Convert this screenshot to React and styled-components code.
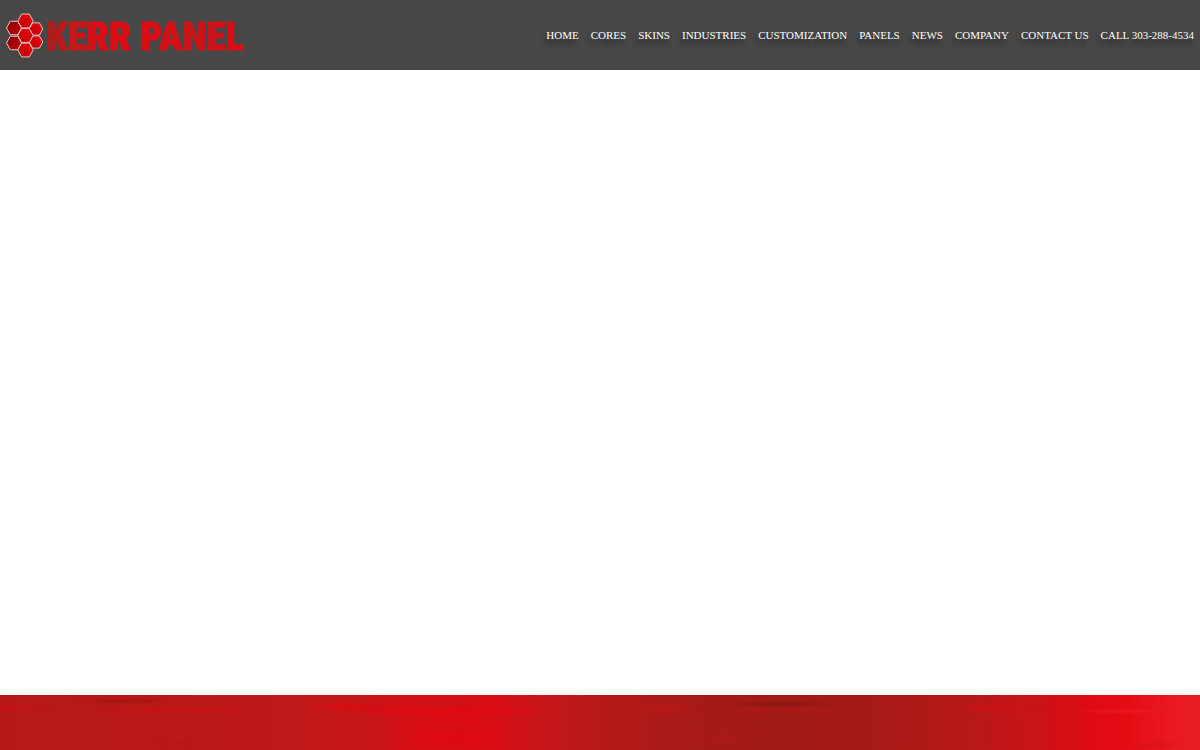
import styled, { createGlobalStyle } from "styled-components";

const GlobalStyle = createGlobalStyle`
  body {
    margin: 0;
    background: #fff;
    font-family: "Liberation Serif", "Times New Roman", serif;
  }
`;

const Page = styled.div`
  display: flex;
  flex-direction: column;
  min-height: 100vh;
`;

const Header = styled.header`
  display: flex;
  align-items: center;
  justify-content: space-between;
  height: 70px;
  padding: 0 6px;
  background: #474747;
`;

const Brand = styled.a`
  display: flex;
  align-items: center;
  gap: 2px;
  text-decoration: none;
`;

const BrandName = styled.span`
  padding-top: 4px;
  font-family: "Roboto Condensed", "Noto Sans ExtraCondensed", "Noto Sans Condensed", "Open Sans Condensed", Roboto, sans-serif;
  font-size: 39px;
  font-weight: 900;
  line-height: 44px;
  white-space: nowrap;
  color: transparent;
  background: linear-gradient(90deg, #a81d1b 0%, #c4181a 12%, #dc0c14 26%, #dc0c14 55%, #c8161a 72%, #dc0c14 100%);
  background-clip: text;
  -webkit-text-stroke: 1px transparent;
`;

const Nav = styled.nav`
  display: flex;
  gap: 12px;
`;

const NavLink = styled.a`
  color: #fff;
  font-size: 11px;
  line-height: 14px;
  text-decoration: none;
  text-transform: uppercase;
  text-shadow: -2px 5px 5px rgba(0, 0, 0, 0.5);
  white-space: nowrap;
`;

const Main = styled.main`
  flex: 1;
`;

const Banner = styled.footer`
  height: 55px;
  overflow: hidden;
  background: linear-gradient(
    90deg,
    #b41919 0%,
    #b91818 12%,
    #bd1818 22%,
    #c51617 30%,
    #d90d14 35%,
    #db0c13 40%,
    #c81518 45%,
    #b51919 50%,
    #a81a18 56%,
    #a01a16 66%,
    #a61a17 73%,
    #b51818 80%,
    #c41517 85%,
    #de0a12 91%,
    #e70c14 94%,
    #e81b21 98%,
    #e71c22 100%
  );
`;

const Streaks = styled.svg`
  display: block;
  width: 100%;
  height: 100%;
`;

const cells = [
  { x: 13, y: 28, r: 7.5 },
  { x: 13, y: 43, r: 7.5 },
  { x: 35, y: 29, r: 6.8 },
  { x: 35, y: 42, r: 6.8 },
  { x: 24.5, y: 21, r: 7.7 },
  { x: 24.5, y: 50, r: 7.7 },
  { x: 24.5, y: 35.5, r: 7.7 },
];

const hexagon = ({ x, y, r }) => {
  const h = r * 0.9;
  const w = r * 0.5;
  return `${x - r},${y} ${x - w},${y - h} ${x + w},${y - h} ${x + r},${y} ${x + w},${y + h} ${x - w},${y + h}`;
};

const streaks = [
  { x: 125, y: 6, rx: 32, ry: 2, color: "#8f1814" },
  { x: 118, y: 4, rx: 20, ry: 1, color: "#d01218" },
  { x: 14, y: 13, rx: 22, ry: 3, color: "#cc1014" },
  { x: 175, y: 15, rx: 75, ry: 1, color: "#dc0a12" },
  { x: 345, y: 12, rx: 25, ry: 4, color: "#dd0b13" },
  { x: 450, y: 16, rx: 90, ry: 2, color: "#e3070f" },
  { x: 440, y: 7, rx: 40, ry: 5, color: "#cb1216" },
  { x: 455, y: 42, rx: 35, ry: 6, color: "#e00910" },
  { x: 660, y: 14, rx: 28, ry: 6, color: "#b81819" },
  { x: 780, y: 9, rx: 38, ry: 2, color: "#83160f" },
  { x: 790, y: 15, rx: 60, ry: 2, color: "#b31918" },
  { x: 720, y: 42, rx: 25, ry: 3, color: "#ac1918" },
  { x: 995, y: 13, rx: 26, ry: 4, color: "#cf1217" },
  { x: 1120, y: 16, rx: 36, ry: 1, color: "#f02a2e" },
  { x: 1155, y: 50, rx: 20, ry: 2, color: "#cf1519" },
  { x: 176, y: 49, rx: 7, ry: 2, color: "#a01816" },
];

const links = [
  "Home",
  "Cores",
  "Skins",
  "Industries",
  "Customization",
  "Panels",
  "News",
  "Company",
  "Contact Us",
];

const Honeycomb = () => (
  <svg width="38" height="46" viewBox="5 12 38 46" aria-hidden="true">
    <defs>
      <linearGradient id="cell" x1="0" y1="1" x2="1" y2="0">
        <stop offset="0" stopColor="#b80005" />
        <stop offset="1" stopColor="#ee060e" />
      </linearGradient>
      <linearGradient id="cellDark" x1="0" y1="0" x2="1" y2="1">
        <stop offset="0" stopColor="#800003" />
        <stop offset="1" stopColor="#cc0006" />
      </linearGradient>
    </defs>
    {cells.map((cell) => (
      <polygon
        key={`${cell.x}-${cell.y}`}
        points={hexagon(cell)}
        fill={cell.x === 13 ? "url(#cellDark)" : "url(#cell)"}
        stroke="#e9c4c0"
        strokeWidth="1"
      />
    ))}
  </svg>
);

const App = () => {
  return (
    <Page>
      <GlobalStyle />
      <Header>
        <Brand href="#">
          <Honeycomb />
          <BrandName>KERR PANEL</BrandName>
        </Brand>
        <Nav>
          {links.map((link) => (
            <NavLink key={link} href="#">
              {link}
            </NavLink>
          ))}
          <NavLink href="tel:303-288-4534">Call 303-288-4534</NavLink>
        </Nav>
      </Header>
      <Main />
      <Banner>
        <Streaks viewBox="0 0 1200 55" preserveAspectRatio="none" aria-hidden="true">
          <defs>
            <filter
              id="soften"
              filterUnits="userSpaceOnUse"
              x="-60"
              y="-20"
              width="1320"
              height="95"
              colorInterpolationFilters="sRGB"
            >
              <feGaussianBlur stdDeviation="10 1" />
            </filter>
          </defs>
          {streaks.map((s) => (
            <ellipse
              key={`${s.x}-${s.y}`}
              cx={s.x}
              cy={s.y}
              rx={s.rx}
              ry={s.ry}
              fill={s.color}
              opacity="0.7"
              filter="url(#soften)"
            />
          ))}
        </Streaks>
      </Banner>
    </Page>
  );
};

export default App;
